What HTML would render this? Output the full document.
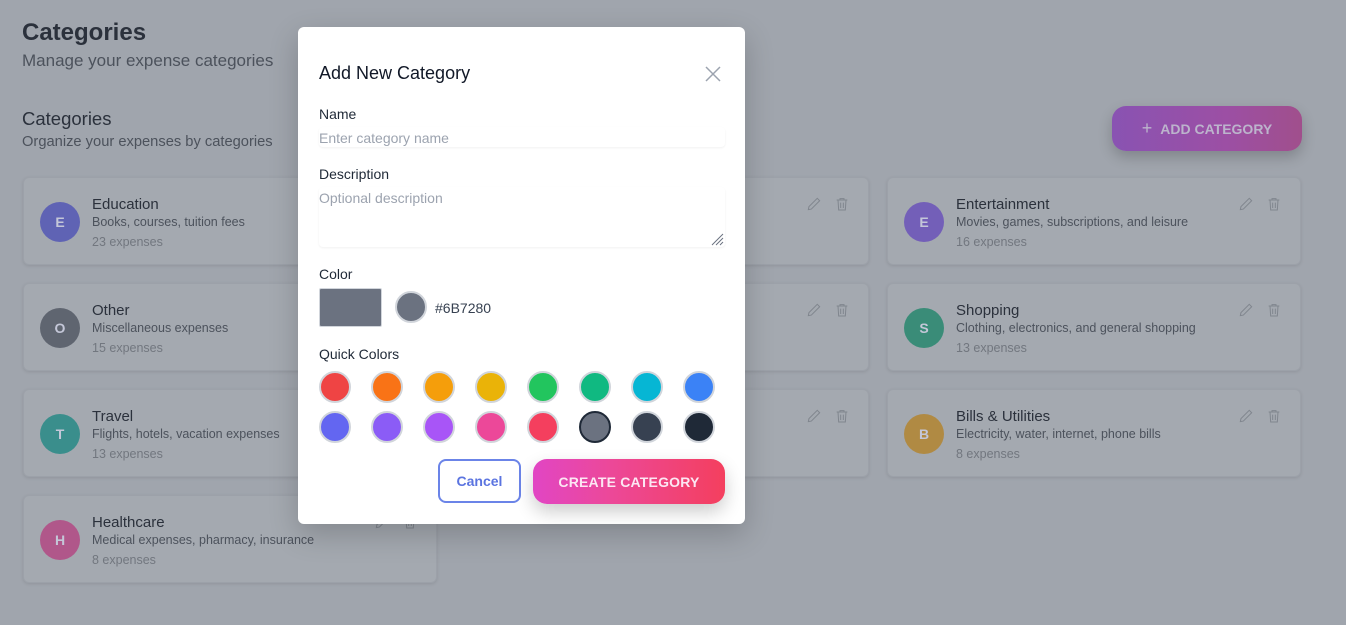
<!DOCTYPE html>
<html><head><meta charset="utf-8"><style>
*{box-sizing:border-box;margin:0;padding:0}
body{width:1346px;height:625px;overflow:hidden;background:#a0a5ad;font-family:"Liberation Sans",sans-serif;position:relative;color:#2b313c}
.a{position:absolute}
h1{position:absolute;left:22px;top:19px;font-size:24px;font-weight:700;color:#2b313c}
.card{position:absolute;width:414px;height:88px;background:#a4a9b0;border:1px solid #9ca1a9;border-radius:6px;box-shadow:0 1px 3px rgba(0,0,0,.1)}
.av{position:absolute;left:16px;top:24px;width:40px;height:40px;border-radius:50%;color:#c4c7d8;font-weight:700;font-size:14px;display:flex;align-items:center;justify-content:center}
.nm{position:absolute;left:68px;top:18px;font-size:15px;color:#2b313c}
.ds{position:absolute;left:68px;top:37px;font-size:12.5px;color:#4c525c;white-space:nowrap}
.ct{position:absolute;left:68px;top:57px;font-size:12.5px;color:#72777f}
.ic{position:absolute;top:18px}
.modal{position:absolute;z-index:6;left:298px;top:27px;width:447px;height:497px;background:#fff;border-radius:6px;box-shadow:0 10px 30px rgba(0,0,0,.2)}
.lb{position:absolute;left:21px;font-size:14px;color:#1f2937}
.ph{position:absolute;left:21px;font-size:14px;color:#9ca3af}
.sw{position:absolute;width:32px;height:32px;border-radius:50%;border:2px solid #d1d5db}
</style></head><body>
<h1>Categories</h1>
<div class="a" style="left:22px;top:51px;font-size:17px;color:#4c525c">Manage your expense categories</div>
<div class="a" style="left:22px;top:108px;font-size:18.5px;color:#2b313c">Categories</div>
<div class="a" style="left:22px;top:134px;font-size:14.7px;color:#4c525c">Organize your expenses by categories</div>
<div class="a" style="left:1112px;top:106px;width:190px;height:45px;border-radius:14px;background:linear-gradient(90deg,#8953b2,#9c4fa4 60%,#a04f8c);box-shadow:0 6px 14px rgba(0,0,0,.2);color:#bcb4cc;font-weight:700;font-size:14px;display:flex;align-items:center;justify-content:center"><span style="font-weight:400;font-size:18px;margin-right:8px">+</span>ADD CATEGORY</div>

<div id="cards"></div>
<script>
var svgE='<svg width="16" height="16" viewBox="0 0 24 24" fill="none" stroke="#80868e" stroke-width="1.5"><path d="M16.9 3.5l3.6 3.6L8 19.6 3.5 20.5l.9-4.5z"/></svg>';
var svgT='<svg width="16" height="16" viewBox="0 0 24 24" fill="none" stroke="#80868e" stroke-width="1.5"><path d="M4 6h16M9 6V4h6v2M6 6l1 15h10l1-15M10 10v8M14 10v8"/></svg>';
var d=[[23,177,'#5f63b4','E','Education','Books, courses, tuition fees','23 expenses'],
[455,177,'#5f63b4','F','Food','Groceries, restaurants, and food place','20 expenses'],
[887,177,'#735fb8','E','Entertainment','Movies, games, subscriptions, and leisure','16 expenses'],
[23,283,'#5f6570','O','Other','Miscellaneous expenses','15 expenses'],
[455,283,'#5878b4','T','Transport','Fuel, transit','14 expenses'],
[887,283,'#3a8c78','S','Shopping','Clothing, electronics, and general shopping','13 expenses'],
[23,389,'#3a8e8c','T','Travel','Flights, hotels, vacation expenses','13 expenses'],
[455,389,'#b08a43','G','Groceries','Supermarket, household, grocery','10 expenses'],
[887,389,'#b08a43','B','Bills &amp; Utilities','Electricity, water, internet, phone bills','8 expenses'],
[23,495,'#b0578a','H','Healthcare','Medical expenses, pharmacy, insurance','8 expenses']];
var h='';d.forEach(function(c){h+='<div class="card" style="left:'+c[0]+'px;top:'+c[1]+'px"><div class="av" style="background:'+c[2]+'">'+c[3]+'</div><div class="nm">'+c[4]+'</div><div class="ds">'+c[5]+'</div><div class="ct">'+c[6]+'</div><div class="ic" style="left:350px">'+svgE+'</div><div class="ic" style="left:378px">'+svgT+'</div></div>';});
document.getElementById('cards').innerHTML=h;
</script>
<div class="modal">
<div class="a" style="left:21px;top:36px;font-size:18px;color:#111827">Add New Category</div>
<svg class="a" style="left:406px;top:38px" width="18" height="18" viewBox="0 0 18 18" stroke="#9ca3af" stroke-width="1.5"><path d="M2 2l14 14M16 2L2 16"/></svg>
<div class="lb" style="top:79px">Name</div>
<div class="a" style="left:21px;top:100px;width:406px;height:20px;border-radius:4px;box-shadow:0 1px 2px rgba(0,0,0,.06)"></div>
<div class="ph" style="top:103px">Enter category name</div>
<div class="lb" style="top:139px">Description</div>
<div class="a" style="left:21px;top:160px;width:406px;height:60px;border-radius:4px;box-shadow:0 1px 2px rgba(0,0,0,.06)"></div>
<div class="ph" style="top:163px">Optional description</div>
<svg class="a" style="left:412px;top:205px" width="14" height="14" stroke="#6b7280" stroke-width="1"><path d="M2 13L13 2M6 13L13 6M10 13L13 10"/></svg>
<div class="lb" style="top:239px">Color</div>
<div class="a" style="left:21px;top:261px;width:63px;height:39px;background:#6b7280;border:1px solid #d1d5db;border-radius:2px"></div>
<div class="sw" style="left:97px;top:264px;background:#6b7280"></div>
<div class="a" style="left:137px;top:273px;font-size:14px;color:#374151">#6B7280</div>
<div class="lb" style="top:319px">Quick Colors</div>
<div id="sw"></div>
<div class="a" style="left:140px;top:432px;width:83px;height:44px;border:2px solid #6b84e8;border-radius:8px;color:#5b74e0;font-weight:700;font-size:14px;display:flex;align-items:center;justify-content:center">Cancel</div>
<div class="a" style="left:235px;top:432px;width:192px;height:45px;border-radius:14px;background:linear-gradient(90deg,#e146c4,#ec4899 40%,#f43f5e);box-shadow:0 8px 18px rgba(0,0,0,.2);color:#fce7f3;font-weight:700;font-size:14px;display:flex;align-items:center;justify-content:center;letter-spacing:.2px">CREATE CATEGORY</div>
</div>
<script>
var cs=['#ef4444','#f97316','#f59e0b','#eab308','#22c55e','#10b981','#06b6d4','#3b82f6','#6366f1','#8b5cf6','#a855f7','#ec4899','#f43f5e','#6b7280','#374151','#1f2937'];
var s='';cs.forEach(function(c,i){var x=21+(i%8)*52,y=344+Math.floor(i/8)*40;s+='<div class="sw" style="left:'+x+'px;top:'+y+'px;background:'+c+(i==13?';border-color:#1f2937':'')+'"></div>';});
document.getElementById('sw').innerHTML=s;
</script>
</body></html>
